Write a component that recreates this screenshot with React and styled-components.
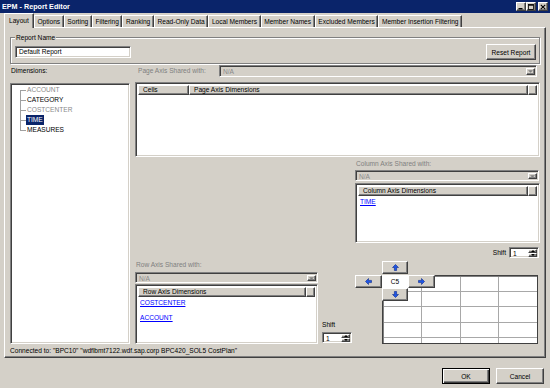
import React from 'react';
import styled, { createGlobalStyle, css } from 'styled-components';

const Global = createGlobalStyle`
  html, body { margin: 0; padding: 0; background: #d4d0c8; }
  body { font-family: "Liberation Sans", Arial, sans-serif; font-size: 6.6px; color: #000; }
  #root { width: 550px; height: 388px; }
`;

const raised = css`
  background: #d4d0c8;
  border: 1px solid;
  border-color: #fff #404040 #404040 #fff;
  box-shadow: inset -1px -1px #808080;
  box-sizing: border-box;
`;

const sunken = css`
  border: 1px solid;
  border-color: #808080 #fff #fff #808080;
  box-shadow: inset 1px 1px #404040, inset -1px -1px #d4d0c8;
  box-sizing: border-box;
`;

const Window = styled.div`
  width: 550px;
  height: 388px;
  display: flex;
  flex-direction: column;
  overflow: hidden;
  background: #d4d0c8;
`;

const TitleBar = styled.div`
  height: 13px;
  flex: none;
  background: #0a246a;
  color: #fff;
  font-weight: bold;
  font-size: 7.2px;
  display: flex;
  align-items: center;
  padding: 0 2px 0 2px;
  box-sizing: border-box;
`;

const Title = styled.span`
  flex: 1;
`;

const CaptionButton = styled.div`
  ${raised};
  width: 10px;
  height: 9px;
  display: flex;
  align-items: center;
  justify-content: center;
  margin-left: ${p => (p.$gap ? 2 : 0)}px;
`;

const TabStrip = styled.div`
  height: 14px;
  flex: none;
  display: flex;
  align-items: flex-end;
  padding-left: 4px;
  position: relative;
  z-index: 1;
`;

const Tab = styled.div`
  height: ${p => (p.$active ? 15 : 12)}px;
  margin-bottom: ${p => (p.$active ? -1 : 0)}px;
  padding: 0 ${p => (p.$active ? 4 : 2.6)}px ${p => (p.$active ? 2 : 0)}px;
  box-sizing: border-box;
  display: flex;
  align-items: center;
  white-space: nowrap;
  background: #d4d0c8;
  border-top: 1px solid #fff;
  border-left: 1px solid #fff;
  border-right: 1px solid #404040;
  box-shadow: inset -1px 0 #808080;
`;

const Panel = styled.div`
  flex: 1;
  min-height: 0;
  margin: 0 4px;
  border: 1px solid;
  border-color: #fff #404040 #404040 #fff;
  box-shadow: inset -1px -1px #808080;
  box-sizing: border-box;
  padding: 5px 5px 0 5px;
  display: flex;
  flex-direction: column;
`;

const GroupBox = styled.fieldset`
  margin: 0;
  padding: 2px 3px 3px 4px;
  border: 1px solid #808080;
  box-shadow: 1px 1px 0 #fff, inset 1px 1px 0 #fff;
  display: flex;
  align-items: center;
  justify-content: space-between;
  min-width: 0;
`;

const Legend = styled.legend`
  padding: 0 1px;
  margin-left: 0;
  line-height: 9px;
  background: #d4d0c8;
`;

const TextField = styled.div`
  ${sunken};
  width: 116px;
  height: 12px;
  background: #fff;
  padding: 0 3px;
  line-height: 10px;
`;

const PushButton = styled.div`
  ${raised};
  width: ${p => p.$w}px;
  height: 16px;
  display: flex;
  align-items: center;
  justify-content: center;
  ${p => p.$default && css`
    border: 1px solid #000;
    box-shadow: inset 1px 1px #fff, inset -1px -1px #404040, inset -2px -2px #808080;
  `}
`;

const MainArea = styled.div`
  flex: 1;
  min-height: 0;
  display: grid;
  grid-template-columns: 120px 1fr;
  column-gap: 5px;
  padding: 1px 0 2px;
`;

const Column = styled.div`
  display: flex;
  flex-direction: column;
  min-height: 0;
  justify-content: ${p => (p.$bottom ? 'flex-end' : 'flex-start')};
`;

const Label = styled.div`
  height: ${p => p.$h || 10}px;
  line-height: ${p => p.$h || 10}px;
  padding-left: ${p => p.$pl || 0}px;
  margin-top: ${p => p.$mt || 0}px;
  color: ${p => (p.$disabled ? '#808080' : '#000')};
  white-space: nowrap;
  flex: none;
`;

const Tree = styled.div`
  ${sunken};
  flex: 1;
  margin-top: 6px;
  background: #fff;
  padding: 1px 0 0 1px;
`;

const TreeList = styled.div`
  position: relative;
  &::before {
    content: '';
    position: absolute;
    left: 8px;
    top: 5px;
    bottom: 5px;
    border-left: 1px solid #a0a0a0;
  }
`;

const TreeItem = styled.div`
  position: relative;
  height: 10px;
  line-height: 10px;
  padding-left: 15px;
  color: ${p => (p.$muted ? '#8a8a8a' : '#000')};
  &::before {
    content: '';
    position: absolute;
    left: 8px;
    width: 6px;
    top: 5px;
    border-top: 1px solid #a0a0a0;
  }
`;

const Selected = styled.span`
  display: inline-block;
  background: #0a246a;
  color: #fff;
  padding: 0 1px;
  margin-left: -1px;
  line-height: 10px;
`;

const AxisRow = styled.div`
  display: flex;
  align-items: center;
  height: 12px;
  flex: none;
`;

const Combo = styled.div`
  ${sunken};
  display: flex;
  height: ${p => p.$h || 12}px;
  width: ${p => (p.$w ? `${p.$w}px` : 'auto')};
  flex: ${p => (p.$w ? 'none' : 1)};
  margin: ${p => p.$m || '0'};
  background: #d4d0c8;
  padding: 2px 1px 1px 2px;
`;

const ComboText = styled.div`
  flex: 1;
  color: #8a8a8a;
  padding-left: 1px;
  line-height: 7px;
`;

const ComboButton = styled.div`
  ${raised};
  width: 9px;
  display: flex;
  align-items: center;
  justify-content: center;
`;

const ListView = styled.div`
  ${sunken};
  background: #fff;
  height: ${p => p.$h}px;
  width: ${p => (p.$w ? `${p.$w}px` : 'auto')};
  margin-top: ${p => p.$mt || 0}px;
  flex: none;
  padding: 2px 2px 1px 2px;
  display: flex;
  flex-direction: column;
`;

const HeaderRow = styled.div`
  display: flex;
  height: 10px;
  flex: none;
`;

const HeaderCell = styled.div`
  ${raised};
  padding-left: 4px;
  line-height: 8px;
  white-space: nowrap;
  width: ${p => (p.$w ? `${p.$w}px` : 'auto')};
  flex: ${p => (p.$w ? 'none' : 1)};
`;

const LinkItem = styled.div`
  height: 15px;
  line-height: 12px;
  padding-left: 2px;
  color: #0000ff;
  text-decoration: underline;
`;

const Lower = styled.div`
  flex: 1;
  min-height: 0;
  display: grid;
  grid-template-columns: 217px 1fr;
  column-gap: 3px;
`;

const ShiftRow = styled.div`
  display: flex;
  align-items: center;
  justify-content: flex-end;
  gap: 3px;
  height: 11px;
  margin-top: 4px;
  margin-right: 1px;
  flex: none;
`;

const Spin = styled.div`
  ${sunken};
  width: 30px;
  height: 11px;
  background: #fff;
  display: flex;
  padding: 1px;
  flex: none;
`;

const SpinValue = styled.div`
  flex: 1;
  padding-left: 2px;
  line-height: 9px;
`;

const SpinButtons = styled.div`
  width: 9px;
  display: flex;
  flex-direction: column;
`;

const SpinButton = styled.div`
  ${raised};
  flex: 1;
  display: flex;
  align-items: center;
  justify-content: center;
`;

const BottomRow = styled.div`
  display: flex;
  margin-top: 1px;
  flex: none;
`;

const ShiftColumn = styled.div`
  display: flex;
  flex-direction: column;
  justify-content: flex-end;
  gap: 3px;
  margin-left: 4px;
  padding-bottom: 1px;
`;

const GridWrap = styled.div`
  position: relative;
  margin: 3px 2px 0 0;
  height: 83px;
  padding: 14px 0 0 27px;
  box-sizing: border-box;
  flex: none;
`;

const Sheet = styled.div`
  height: 69px;
  box-sizing: border-box;
  border: 1px solid #404040;
  box-shadow: inset 1px 1px #808080;
  background: #fff;
  display: grid;
  grid-template-columns: repeat(4, 1fr);
  grid-template-rows: 15px 15px 16px 15px 1fr;
  padding: 1px 0 0 1px;
`;

const SheetCell = styled.div`
  border-right: ${p => (p.$last ? 'none' : '1px solid #a8a8a8')};
  border-bottom: ${p => (p.$lastRow ? 'none' : '1px solid #a8a8a8')};
`;

const NavButton = styled.div`
  ${raised};
  position: absolute;
  left: ${p => p.$x}px;
  top: ${p => p.$y}px;
  width: ${p => p.$w}px;
  height: 13px;
  display: flex;
  align-items: center;
  justify-content: center;
`;

const CellRef = styled.div`
  position: absolute;
  left: 27px;
  top: 14px;
  width: 26px;
  height: 13px;
  background: #fff;
  display: flex;
  align-items: center;
  justify-content: center;
`;

const Status = styled.div`
  height: 11px;
  line-height: 9px;
  flex: none;
  white-space: nowrap;
`;

const Footer = styled.div`
  height: 30px;
  flex: none;
  display: flex;
  align-items: flex-start;
  justify-content: flex-end;
  gap: 6px;
  padding: 10px 6px 0 0;
  box-sizing: border-box;
`;

const Arrow = ({ dir }) => {
  const rot = { up: 0, right: 90, down: 180, left: 270 }[dir];
  return (
    <svg width="7" height="7" viewBox="0 0 7 7" style={{ transform: `rotate(${rot}deg)` }}>
      <path d="M3.5 0.5 L6.5 3.5 L4.6 3.5 L4.6 6.5 L2.4 6.5 L2.4 3.5 L0.5 3.5 Z" fill="#1e55e6" stroke="#0b2a8a" strokeWidth="0.6" />
    </svg>
  );
};

const Tri = ({ down = true, color = '#000', w = 5 }) => (
  <svg width={w} height={Math.ceil(w / 2)} viewBox="0 0 6 3">
    <path d={down ? 'M0 0 L6 0 L3 3 Z' : 'M0 3 L6 3 L3 0 Z'} fill={color} />
  </svg>
);

const DisabledCombo = props => (
  <Combo {...props}>
    <ComboText>N/A</ComboText>
    <ComboButton>
      <Tri color="#808080" w={5} />
    </ComboButton>
  </Combo>
);

const SpinBox = () => (
  <Spin>
    <SpinValue>1</SpinValue>
    <SpinButtons>
      <SpinButton><Tri down={false} w={4} /></SpinButton>
      <SpinButton><Tri w={4} /></SpinButton>
    </SpinButtons>
  </Spin>
);

const tabs = ['Layout', 'Options', 'Sorting', 'Filtering', 'Ranking', 'Read-Only Data', 'Local Members', 'Member Names', 'Excluded Members', 'Member Insertion Filtering'];

export default function App() {
  return (
    <>
      <Global />
      <Window>
        <TitleBar>
          <Title>EPM - Report Editor</Title>
          <CaptionButton>
            <svg width="6" height="6" viewBox="0 0 6 6"><rect x="0.5" y="4" width="4" height="1.4" fill="#000" /></svg>
          </CaptionButton>
          <CaptionButton>
            <svg width="6" height="6" viewBox="0 0 6 6"><rect x="0.5" y="0.5" width="5" height="5" fill="none" stroke="#000" strokeWidth="0.8" /><rect x="0.5" y="0.5" width="5" height="1.2" fill="#000" /></svg>
          </CaptionButton>
          <CaptionButton $gap>
            <svg width="6" height="6" viewBox="0 0 6 6"><path d="M0.8 0.8 L5.2 5.2 M5.2 0.8 L0.8 5.2" stroke="#000" strokeWidth="1.1" /></svg>
          </CaptionButton>
        </TitleBar>

        <TabStrip>
          {tabs.map((t, i) => (
            <Tab key={t} $active={i === 0}>{t}</Tab>
          ))}
        </TabStrip>

        <Panel>
          <GroupBox>
            <Legend>Report Name</Legend>
            <TextField>Default Report</TextField>
            <PushButton $w={50}>Reset Report</PushButton>
          </GroupBox>

          <MainArea>
            <Column>
              <Label $h={12} $pl={1}>Dimensions:</Label>
              <Tree>
                <TreeList>
                  <TreeItem $muted>ACCOUNT</TreeItem>
                  <TreeItem>CATEGORY</TreeItem>
                  <TreeItem $muted>COSTCENTER</TreeItem>
                  <TreeItem><Selected>TIME</Selected></TreeItem>
                  <TreeItem>MEASURES</TreeItem>
                </TreeList>
              </Tree>
            </Column>

            <Column>
              <AxisRow>
                <Label $disabled $pl={3} style={{ width: 81 }}>Page Axis Shared with:</Label>
                <DisabledCombo $m="0 3px 0 0" />
              </AxisRow>
              <ListView $h={75} $mt={5}>
                <HeaderRow>
                  <HeaderCell $w={51}>Cells</HeaderCell>
                  <HeaderCell>Page Axis Dimensions</HeaderCell>
                  <HeaderCell $w={9} />
                </HeaderRow>
              </ListView>

              <Lower>
                <Column $bottom>
                  <Label $disabled $pl={1}>Row Axis Shared with:</Label>
                  <DisabledCombo $w={183} $h={11} $m="2px 0 0 0" />
                  <BottomRow>
                    <ListView $h={60} $w={183}>
                      <HeaderRow>
                        <HeaderCell>Row Axis Dimensions</HeaderCell>
                        <HeaderCell $w={9} />
                      </HeaderRow>
                      <LinkItem>COSTCENTER</LinkItem>
                      <LinkItem>ACCOUNT</LinkItem>
                    </ListView>
                    <ShiftColumn>
                      <Label $h={8}>Shift</Label>
                      <SpinBox />
                    </ShiftColumn>
                  </BottomRow>
                </Column>

                <Column>
                  <Label $disabled $pl={1} $mt={2}>Column Axis Shared with:</Label>
                  <DisabledCombo $h={11} $m="1px 1px 0 0" />
                  <ListView $h={60} $mt={2}>
                    <HeaderRow>
                      <HeaderCell>Column Axis Dimensions</HeaderCell>
                      <HeaderCell $w={9} />
                    </HeaderRow>
                    <LinkItem>TIME</LinkItem>
                  </ListView>
                  <ShiftRow>
                    <span>Shift</span>
                    <SpinBox />
                  </ShiftRow>
                  <GridWrap>
                    <Sheet>
                      {Array.from({ length: 20 }).map((_, i) => (
                        <SheetCell key={i} $last={i % 4 === 3} $lastRow={i >= 16} />
                      ))}
                    </Sheet>
                    <NavButton $x={27} $y={0} $w={26}><Arrow dir="up" /></NavButton>
                    <NavButton $x={0} $y={14} $w={27}><Arrow dir="left" /></NavButton>
                    <CellRef>C5</CellRef>
                    <NavButton $x={53} $y={14} $w={27}><Arrow dir="right" /></NavButton>
                    <NavButton $x={27} $y={27} $w={26}><Arrow dir="down" /></NavButton>
                  </GridWrap>
                </Column>
              </Lower>
            </Column>
          </MainArea>

          <Status>Connected to: "BPC10" "wdflbmt7122.wdf.sap.corp BPC420_SOL5 CostPlan"</Status>
        </Panel>

        <Footer>
          <PushButton $w={48} $default>OK</PushButton>
          <PushButton $w={48}>Cancel</PushButton>
        </Footer>
      </Window>
    </>
  );
}
